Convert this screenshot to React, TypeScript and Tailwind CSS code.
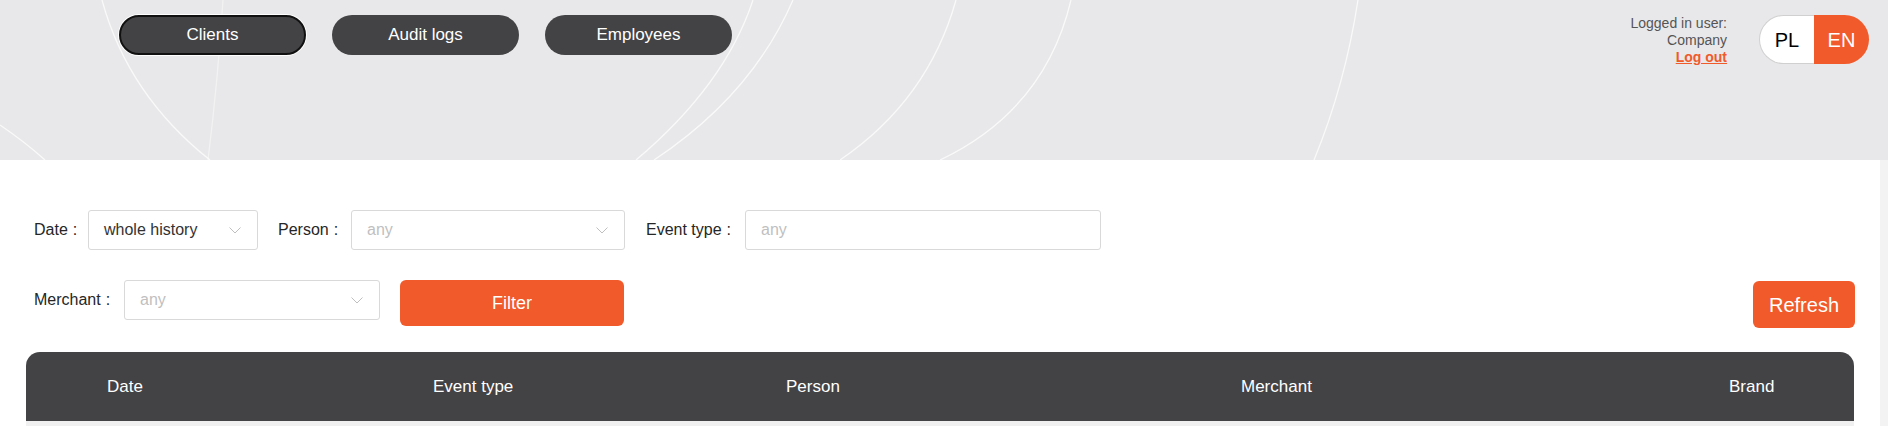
import React from "react";

const ORANGE = "bg-[#f15a2b]";

function Chevron() {
  return (
    <svg width="12" height="7" viewBox="0 0 12 7" className="shrink-0">
      <polyline points="0.5,0.5 6,6 11.5,0.5" fill="none" stroke="#bfbfbf" strokeWidth="1" />
    </svg>
  );
}

function Label({ text, w }: { text: string; w: string }) {
  return (
    <div className={`${w} shrink-0 flex items-center text-[16px] text-[#262626]`}>
      <span>{text}</span>
      <span className="ml-[5px]">:</span>
    </div>
  );
}

function Select({ value, placeholder, w }: { value?: string; placeholder?: string; w: string }) {
  return (
    <div className={`${w} h-10 shrink-0 border border-[#d9d9d9] rounded-[3px] bg-white flex items-center pl-[15px] pr-[16px]`}>
      <span className={`flex-1 text-[16px] ${value ? "text-[#333]" : "text-[#bfbfbf]"}`}>{value ?? placeholder}</span>
      <Chevron />
    </div>
  );
}

function NavButton({ label, active }: { label: string; active?: boolean }) {
  return (
    <button
      className={`w-[187px] h-10 rounded-full bg-[#434245] text-white text-[17px] flex items-center justify-center ${
        active ? "border-2 border-[#111] ring-1 ring-white" : ""
      }`}
    >
      {label}
    </button>
  );
}

export default function App() {
  return (
    <div className="w-[1888px] font-['Liberation_Sans',Arial,sans-serif] bg-white">
      {/* Header */}
      <div className="relative h-[160px] bg-[#e8e8ea] overflow-hidden">
        <svg className="absolute inset-0 pointer-events-none" width="1888" height="160" viewBox="0 0 1888 160">
          <g fill="none" stroke="#ffffff" strokeOpacity="0.75" strokeWidth="1.3">
            <path d="M102 0 Q 128 95 210 160" />
            <path d="M0 125 Q 25 142 45 160" />
            <path d="M223 0 Q 218 80 208 160" strokeOpacity="0.45" />
            <path d="M753 0 Q 725 85 636 160" />
            <path d="M793 0 Q 752 95 654 160" />
            <path d="M956 0 Q 928 100 840 160" />
            <path d="M1071 0 Q 1045 110 940 160" />
            <path d="M1358 0 Q 1345 85 1314 160" />
          </g>
        </svg>
        <div className="relative flex h-full">
          <div className="flex gap-[26px] ml-[119px] mt-[15px] h-10">
            <NavButton label="Clients" active />
            <NavButton label="Audit logs" />
            <NavButton label="Employees" />
          </div>
          <div className="ml-auto mr-[19px] flex items-start">
            <div className="mt-[15px] mr-[32px] text-right text-[14px] leading-[17px] text-[#555]">
              <div>Logged in user:</div>
              <div>Company</div>
              <div className="font-bold text-[#f15a2b] underline">Log out</div>
            </div>
            <div className="mt-[15px] flex h-[49px] text-[20px]">
              <div className="w-[55px] h-full bg-white border border-[#d0d0d0] border-r-0 rounded-l-full flex items-center justify-center text-black">
                PL
              </div>
              <div className={`w-[55px] h-full ${ORANGE} rounded-r-full flex items-center justify-center text-white`}>
                EN
              </div>
            </div>
          </div>
        </div>
      </div>

      {/* Body */}
      <div className="flex">
        <div className="flex-1">
          <div className="pt-[50px] pl-[34px] pr-[25px]">
            <div className="flex items-center h-10">
              <Label text="Date" w="w-[54px]" />
              <Select value="whole history" w="w-[170px]" />
              <div className="w-[20px]" />
              <Label text="Person" w="w-[73px]" />
              <Select placeholder="any" w="w-[274px]" />
              <div className="w-[21px]" />
              <Label text="Event type" w="w-[99px]" />
              <div className="w-[356px] h-10 border border-[#d9d9d9] rounded-[3px] flex items-center pl-[15px] text-[16px] text-[#bfbfbf]">
                any
              </div>
            </div>
            <div className="flex items-start mt-[30px]">
              <div className="flex items-center h-10">
                <Label text="Merchant" w="w-[90px]" />
                <Select placeholder="any" w="w-[256px]" />
              </div>
              <button className={`ml-[20px] w-[224px] h-[46px] ${ORANGE} rounded-[6px] text-white text-[18px]`}>
                Filter
              </button>
              <button className={`ml-auto mt-[1px] w-[102px] h-[47px] ${ORANGE} rounded-[6px] text-white text-[20px]`}>
                Refresh
              </button>
            </div>
          </div>
          <div className="px-[26px] mt-[24px]">
            <div className="grid grid-cols-[407px_353px_455px_488px_1fr] h-[69px] items-center bg-[#434245] rounded-t-[14px] text-white text-[17px]">
              <div className="pl-[81px]">Date</div>
              <div>Event type</div>
              <div>Person</div>
              <div>Merchant</div>
              <div>Brand</div>
            </div>
            <div className="h-[40px] bg-[#f0f0f0]" />
          </div>
        </div>
        <div className="w-[8px] bg-[#f3f3f3]" />
      </div>
    </div>
  );
}
